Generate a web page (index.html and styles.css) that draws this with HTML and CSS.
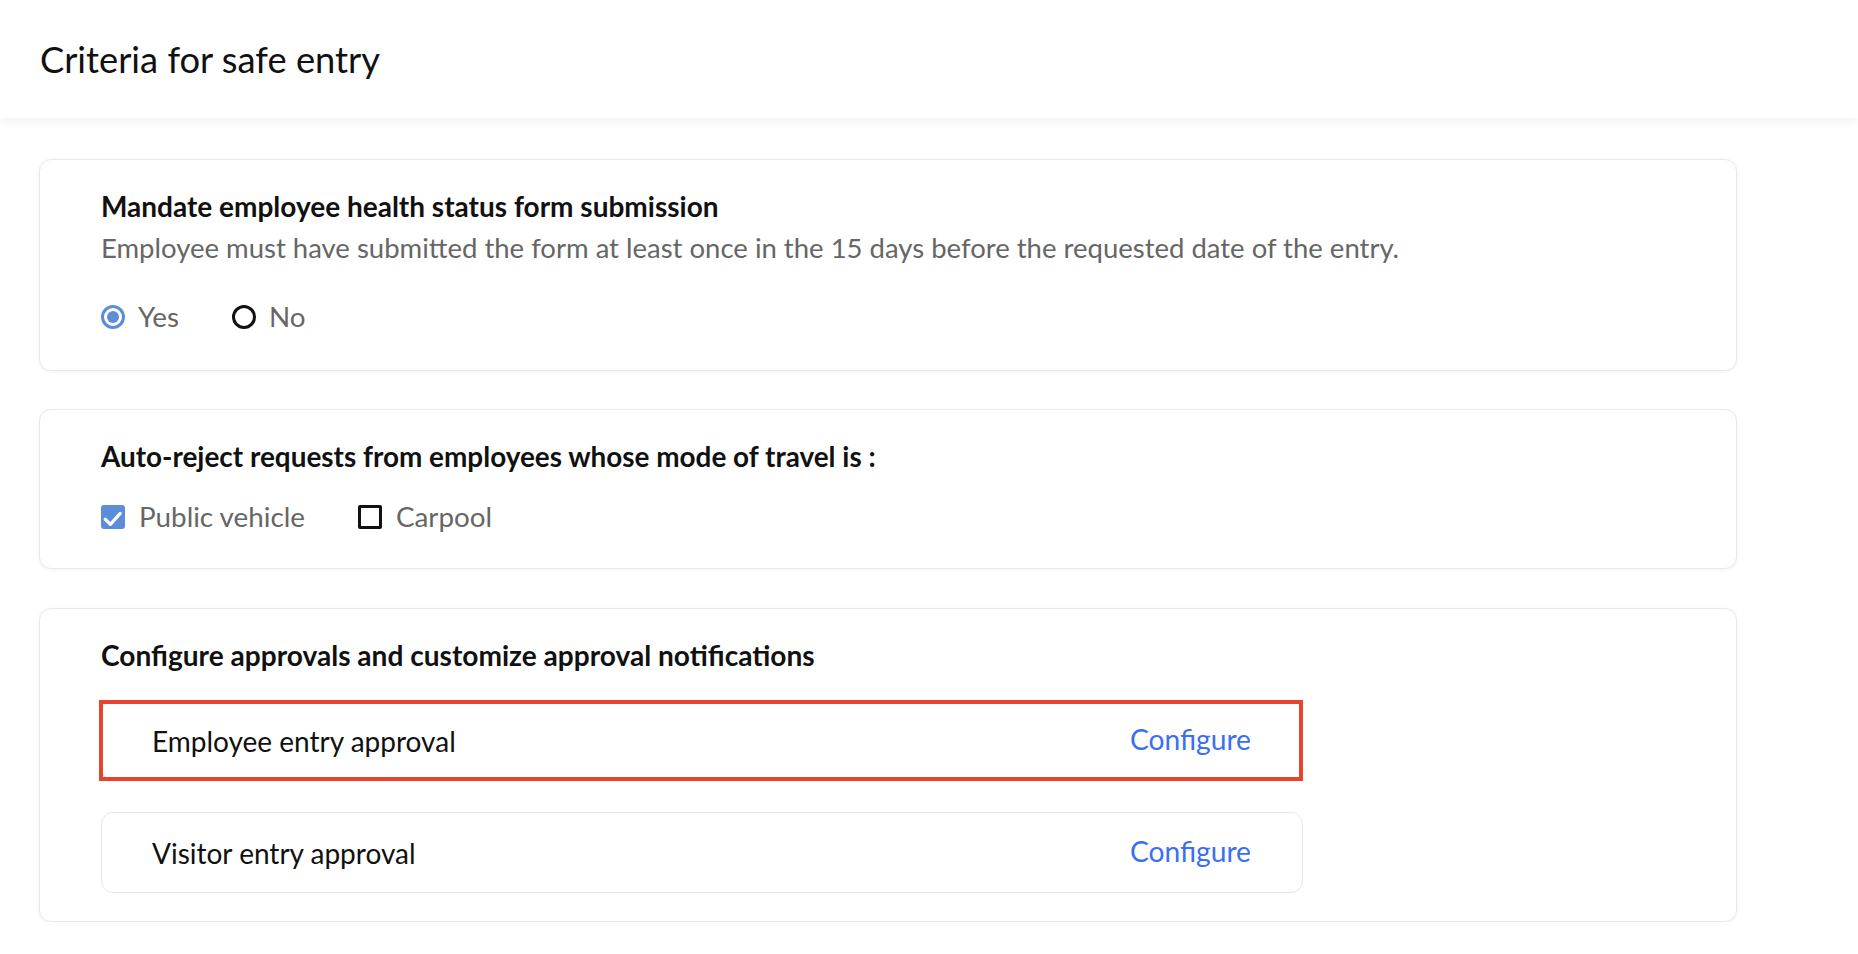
FILE: index.html
```html
<!DOCTYPE html>
<html lang="en">
<head>
<meta charset="utf-8">
<title>Criteria for safe entry</title>
<link rel="stylesheet" href="styles.css">
</head>
<body>
<header class="topbar">
  <h1 class="page-title">Criteria for safe entry</h1>
</header>
<main class="content">
  <section class="card card-health">
    <h2 class="card-title">Mandate employee health status form submission</h2>
    <p class="card-desc">Employee must have submitted the form at least once in the 15 days before the requested date of the entry.</p>
    <div class="options options-radio">
      <label class="option">
        <span class="radio radio-on"></span>
        <span class="option-label">Yes</span>
      </label>
      <label class="option">
        <span class="radio"></span>
        <span class="option-label">No</span>
      </label>
    </div>
  </section>

  <section class="card card-travel">
    <h2 class="card-title">Auto-reject requests from employees whose mode of travel is :</h2>
    <div class="options options-check">
      <label class="option">
        <span class="check check-on">
          <svg viewBox="0 0 24 24" width="24" height="24"><path d="M4.2 14.2 L9.4 19.4 L19.2 8.4" fill="none" stroke="#fff" stroke-width="3.2" stroke-linecap="round" stroke-linejoin="round"/></svg>
        </span>
        <span class="option-label">Public vehicle</span>
      </label>
      <label class="option">
        <span class="check"></span>
        <span class="option-label">Carpool</span>
      </label>
    </div>
  </section>

  <section class="card card-approvals">
    <h2 class="card-title card-title-wide">Configure approvals and customize approval notifications</h2>
    <div class="approval-list">
      <div class="approval-row highlighted">
        <span class="approval-name">Employee entry approval</span>
        <a class="approval-link" href="#">Configure</a>
      </div>
      <div class="approval-row">
        <span class="approval-name">Visitor entry approval</span>
        <a class="approval-link" href="#">Configure</a>
      </div>
    </div>
  </section>
</main>
</body>
</html>
```

FILE: styles.css
```css
* { box-sizing: border-box; }

html, body {
  margin: 0;
  padding: 0;
  background: #ffffff;
  font-family: Lato, "Open Sans", "Liberation Sans", sans-serif;
  color: #111;
}

.topbar {
  height: 118px;
  display: flex;
  align-items: center;
  padding-left: 40px;
  background: #fff;
  box-shadow: 0 2px 10px rgba(0, 0, 0, 0.07);
  position: relative;
  z-index: 1;
}

.page-title {
  margin: 0;
  font-size: 36.3px;
  font-weight: 400;
  color: #111;
}

.content {
  padding: 41px 121px 0 39px;
  display: flex;
  flex-direction: column;
  gap: 38px;
}

.card {
  background: #fff;
  border: 1px solid #e8e8e8;
  border-radius: 12px;
  box-shadow: 0 1px 4px rgba(0, 0, 0, 0.05);
  padding: 28px 61px 35px 61px;
}

.card-travel { padding-bottom: 33px; }
.card-approvals { margin-top: 1px; padding-top: 28px; padding-bottom: 28px; }

.card-title {
  margin: 0;
  font-size: 28px;
  line-height: 36px;
  font-weight: 700;
  color: #111;
}

.card-travel .card-title { font-size: 27.9px; }
.card-title-wide { font-size: 28.1px; }

.card-desc {
  margin: 6px 0 0 0;
  font-size: 27.5px;
  line-height: 36px;
  color: #666;
}

.options {
  display: flex;
  align-items: center;
  gap: 53px;
}

.options-radio { margin-top: 33px; }
.options-check { margin-top: 25px; }

.option {
  display: flex;
  align-items: center;
  font-size: 27.8px;
  line-height: 36px;
  color: #666;
}

.radio {
  width: 24px;
  height: 24px;
  border-radius: 50%;
  border: 3px solid #111;
  margin-right: 13px;
  display: flex;
  align-items: center;
  justify-content: center;
  flex: none;
}

.radio-on {
  border-color: #5b8dd9;
}

.radio-on::after {
  content: "";
  width: 12px;
  height: 12px;
  border-radius: 50%;
  background: #5b8dd9;
}

.check {
  width: 24px;
  height: 24px;
  border: 3px solid #111;
  border-radius: 2px;
  margin-right: 14px;
  flex: none;
  display: flex;
}

.check-on {
  border: none;
  border-radius: 3px;
  background: #5b8dd9;
}

.approval-list {
  margin-top: 27px;
  width: 1202px;
  display: flex;
  flex-direction: column;
  gap: 31px;
}

.approval-row {
  position: relative;
  height: 81px;
  border: 1px solid #e6e6e6;
  border-radius: 12px;
  display: flex;
  align-items: center;
  justify-content: space-between;
  padding: 0 51px 0 50px;
  font-size: 28px;
  line-height: 36px;
}

.approval-row.highlighted::after {
  content: "";
  position: absolute;
  top: -1px;
  left: -3px;
  right: -1px;
  bottom: -1px;
  border: 4px solid #e8432d;
}

.approval-name {
  color: #111;
}

.approval-link {
  color: #3c6ef2;
  font-size: 28.2px;
  text-decoration: none;
  margin-top: -3px;
}
```
